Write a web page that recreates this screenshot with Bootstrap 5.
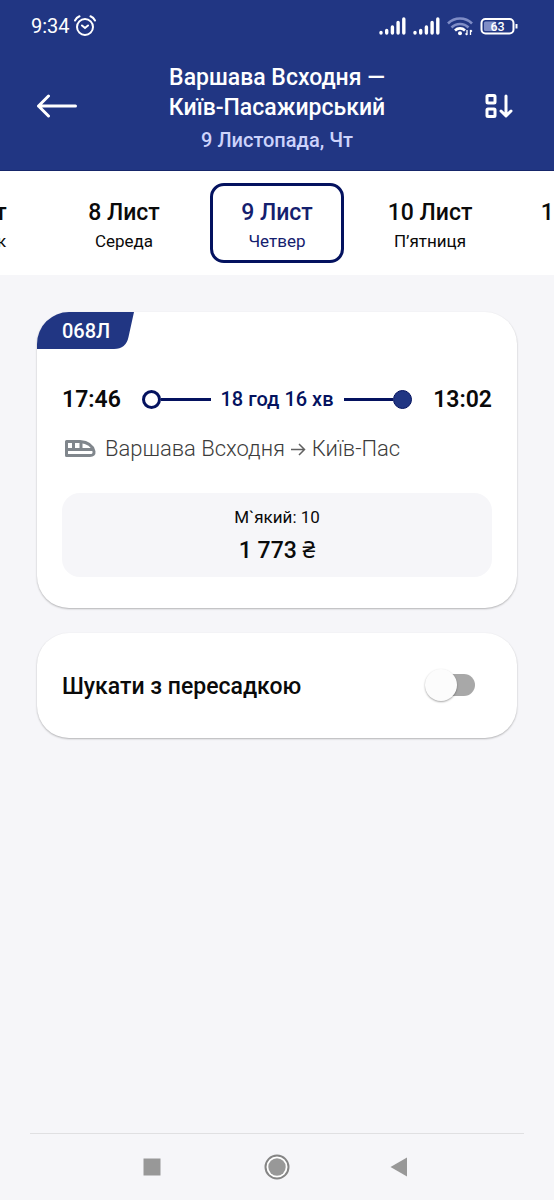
<!DOCTYPE html>
<html lang="uk">
<head>
<meta charset="utf-8">
<meta name="viewport" content="width=device-width, initial-scale=1">
<title>Варшава Всходня — Київ-Пасажирський</title>
<link href="https://cdn.jsdelivr.net/npm/bootstrap@5.3.0/dist/css/bootstrap.min.css" rel="stylesheet">
<style>
  :root { --brand: #213683; --navy: #04125f; --page: #f6f6f9; }
  body { font-family: Roboto, "Noto Sans", sans-serif; background: var(--page); color: #0a0a0a; }
  svg { display: block; flex: none; }
  .brand-bg { background: var(--brand); }
  .status-row { height: 52px; padding: 0 36px 0 31px; font-size: 20px; }
  .status-icons { gap: 7px; }
  .app-bar { padding: 11px 36px 13px; border-bottom: 1px solid #16266a; }
  .route-title { font-size: 23px; line-height: 30px; font-weight: 500; margin: 0; }
  .route-date { font-size: 20px; line-height: 34px; font-weight: 500; color: #cdd3fb; margin: 0; }
  .side-slot { width: 46px; }
  .date-strip { gap: 19px; padding: 12px 0; }
  .day-tab { flex: 0 0 134px; height: 80px; padding-top: 6px; border: 3px solid transparent; border-radius: 14px; color: #0a0a0a; font-size: 17px; line-height: 26px; }
  .day-tab strong { font-size: 23px; line-height: 30px; font-weight: 500; }
  .day-tab.active { border-color: var(--navy); color: #14206e; }
  .page-body { padding: 37px 37px 0; gap: 25px; }
  .panel { background: #fff; border-radius: 32px; box-shadow: 0 1px 2px rgba(0,0,0,.28); }
  .trip-body { padding: 32px 25px 31px; }
  .train-no { width: 97px; height: 37px; }
  .train-no span { top: 0; left: 25px; font-size: 20px; line-height: 38px; font-weight: 500; }
  .trip-time { padding-top: 2px; font-size: 23px; line-height: 34px; font-weight: 600; }
  .trip-line { gap: 10px; margin: 0 21px; color: var(--navy); font-size: 20px; font-weight: 500; }
  .dot { width: 19px; height: 19px; border-radius: 50%; border: 3px solid var(--navy); flex: none; }
  .dot-full { background: var(--brand); border-width: 1px; }
  .bar { height: 3px; background: var(--navy); }
  .trip-route { font-size: 22px; line-height: 32px; font-weight: 300; color: #3c3c3c; gap: 8px; margin: 16px 0 28px; }
  .price-btn { background: var(--page); border-radius: 18px; padding: 8px 0; font-size: 17px; line-height: 32px; color: #0a0a0a; }
  .price-btn strong { font-size: 23px; line-height: 36px; font-weight: 500; }
  .transfer { padding: 34px 42px 35px 25px; }
  .transfer label { padding-top: 3px; font-size: 23px; line-height: 33px; font-weight: 500; }
  .toggle { appearance: none; width: 50px; height: 22px; margin: 0; display: flex; align-items: center;
    background: linear-gradient(#a8a8a8, #a8a8a8) right center / 36px 22px no-repeat; border-radius: 11px; }
  .toggle::before { content: ""; flex: none; width: 32px; height: 32px; border-radius: 50%; background: #fcfcfc; box-shadow: 0 1px 2px rgba(0,0,0,.35); }
  .toggle:checked { justify-content: flex-end; }
  .system-nav { margin: 0 30px; border-top: 1px solid #e0e0e2; height: 67px; padding: 0 109px; }
</style>
</head>
<body class="min-vh-100 d-flex flex-column overflow-x-hidden">

<header class="brand-bg text-white">
  <div class="status-row d-flex align-items-center justify-content-between">
    <div class="d-flex align-items-center gap-1">
      <span>9:34</span>
      <svg width="22" height="22" viewBox="0 0 22 22" fill="none" stroke="#fff" stroke-width="2" stroke-linecap="round"><circle cx="11" cy="12" r="8"/><path d="M1 5.500Q2.500 2.500 5.500 1.300M21 5.500Q19.500 2.500 16.500 1.300M8 10.500l3 2.500 3-2.500"/></svg>
    </div>
    <div class="status-icons d-flex align-items-center">
      <svg width="27" height="18" viewBox="0 0 27 18" stroke="#fff" stroke-width="3.400" stroke-linecap="round"><path d="M2 16v-.5M7.700 16v-2.500M13.400 16v-6M19.100 16V5.500M24.800 16V2"/></svg>
      <svg width="27" height="18" viewBox="0 0 27 18" stroke="#fff" stroke-width="3.400" stroke-linecap="round"><path d="M2 16v-.5M7.700 16v-2.500M13.400 16v-6M19.100 16V5.500M24.800 16V2"/></svg>
      <svg width="26" height="20" viewBox="0 0 26 20" fill="none" stroke-width="2.600"><path d="M1 7.500a17 17 0 0 1 24 0M4.500 11.500a12 12 0 0 1 17 0" stroke="#7f8dc6"/><path d="M8 14.500a7 7 0 0 1 10 0" stroke="#fff"/><circle cx="13" cy="17.300" r="2" fill="#fff"/><path d="M20 14v5M23.500 19v-5M18.500 17.500l1.500 1.500M25 15.500L23.500 14" stroke="#fff" stroke-width="1.300"/></svg>
      <svg width="38" height="18" viewBox="0 0 38 18"><rect x="1.500" y="2" width="32" height="14.500" rx="4" fill="none" stroke="#fff" stroke-width="2"/><rect x="4" y="4.500" width="12" height="9.500" rx="1.500" fill="#7f8dc6"/><path d="M36.500 7v4.500" stroke="#fff" stroke-width="2"/><text x="17.500" y="13.700" text-anchor="middle" font-size="12.500" font-weight="500" fill="#fff">63</text></svg>
    </div>
  </div>
  <div class="app-bar d-flex align-items-center justify-content-between">
    <button type="button" class="btn p-0 pb-2 border-0 side-slot" aria-label="Назад">
      <svg width="42" height="24" viewBox="0 0 42 24" fill="none" stroke="#fff" stroke-width="3" stroke-linecap="round" stroke-linejoin="round"><path d="M39.500 12H2.500M12.500 2L2.500 12l10 10"/></svg>
    </button>
    <div class="text-center">
      <h1 class="route-title">Варшава Всходня —<br>Київ-Пасажирський</h1>
      <p class="route-date">9 Листопада, Чт</p>
    </div>
    <button type="button" class="btn p-0 pb-2 pe-1 border-0 side-slot d-flex justify-content-end" aria-label="Сортування">
      <svg width="30" height="26" viewBox="0 0 30 26" fill="none" stroke="#fff" stroke-width="3" stroke-linecap="round" stroke-linejoin="round"><rect x="3" y="2.500" width="8" height="7.500" rx="1"/><rect x="3" y="16" width="8" height="7.500" rx="1"/><path d="M22 3v19.500M17 18l5 4.800 5-4.800"/></svg>
    </button>
  </div>
</header>

<nav class="date-strip bg-white d-flex justify-content-center overflow-hidden" aria-label="Дата">
  <a href="#d7" class="day-tab text-decoration-none d-flex flex-column align-items-center justify-content-center"><strong>7 Лист</strong>Вівторок</a>
  <a href="#d8" class="day-tab text-decoration-none d-flex flex-column align-items-center justify-content-center"><strong>8 Лист</strong>Середа</a>
  <a href="#d9" class="day-tab active text-decoration-none d-flex flex-column align-items-center justify-content-center" aria-current="date"><strong>9 Лист</strong>Четвер</a>
  <a href="#d10" class="day-tab text-decoration-none d-flex flex-column align-items-center justify-content-center"><strong>10 Лист</strong>П’ятниця</a>
  <a href="#d11" class="day-tab text-decoration-none d-flex flex-column align-items-center justify-content-center"><strong>11 Лист</strong>Субота</a>
</nav>

<main class="page-body d-flex flex-column flex-grow-1">
  <article class="panel">
    <div class="train-no position-relative text-white">
      <svg width="97" height="37" viewBox="0 0 97 37"><path d="M32 0H97L91.500 25Q89 37 77 37H0V32A32 32 0 0 1 32 0Z" fill="#213683"/></svg>
      <span class="position-absolute">068Л</span>
    </div>
    <div class="trip-body">
      <div class="d-flex align-items-center">
        <time class="trip-time">17:46</time>
        <div class="trip-line d-flex align-items-center flex-grow-1">
          <div class="d-flex align-items-center flex-grow-1"><span class="dot"></span><span class="bar flex-grow-1"></span></div>
          <span>18 год 16 хв</span>
          <div class="d-flex align-items-center flex-grow-1"><span class="bar flex-grow-1"></span><span class="dot dot-full"></span></div>
        </div>
        <time class="trip-time">13:02</time>
      </div>
      <div class="trip-route d-flex align-items-center">
        <svg width="35" height="20" viewBox="0 0 35 20" fill="none" stroke="#80868c" stroke-width="3"><path d="M4.500 2.500H18Q30 3.500 32 12.500Q32.500 16.500 28 16.500H4.500Z" stroke-linejoin="round"/><path d="M4.500 10.500H30.500M11.500 2.500v8M19 2.500v8"/></svg>
        <span class="d-flex align-items-center">Варшава Всходня&nbsp;<svg width="16" height="16" viewBox="0 0 16 16" fill="none" stroke="#616161" stroke-width="1.500"><path d="M1 8.500h13.500M9 3l5.500 5.500L9 14"/></svg>&nbsp;Київ-Пас</span>
      </div>
      <button type="button" class="price-btn btn border-0 w-100 d-flex flex-column align-items-center">М`який: 10<strong>1 773 <span class="fw-normal">₴</span></strong></button>
    </div>
  </article>

  <section class="panel transfer d-flex align-items-center justify-content-between">
    <label for="transfer">Шукати з пересадкою</label>
    <input class="toggle" type="checkbox" role="switch" id="transfer">
  </section>
</main>

<footer class="system-nav d-flex align-items-center justify-content-between">
  <button type="button" class="btn p-0 border-0" aria-label="Останні"><svg width="26" height="26" viewBox="0 0 26 26"><path d="M4.500 4.500h17v17h-17z" fill="#989898"/></svg></button>
  <button type="button" class="btn p-0 border-0" aria-label="Додому"><svg width="26" height="26" viewBox="0 0 26 26"><circle cx="13" cy="13" r="11.500" fill="#fff" stroke="#858585" stroke-width="2"/><circle cx="13" cy="13" r="8.700" fill="#989898"/></svg></button>
  <button type="button" class="btn p-0 border-0" aria-label="Назад до системи"><svg width="26" height="26" viewBox="0 0 26 26"><path d="M1.500 13L18 3.500v19z" fill="#989898"/></svg></button>
</footer>

<script src="https://cdn.jsdelivr.net/npm/bootstrap@5.3.0/dist/js/bootstrap.bundle.min.js"></script>
</body>
</html>
